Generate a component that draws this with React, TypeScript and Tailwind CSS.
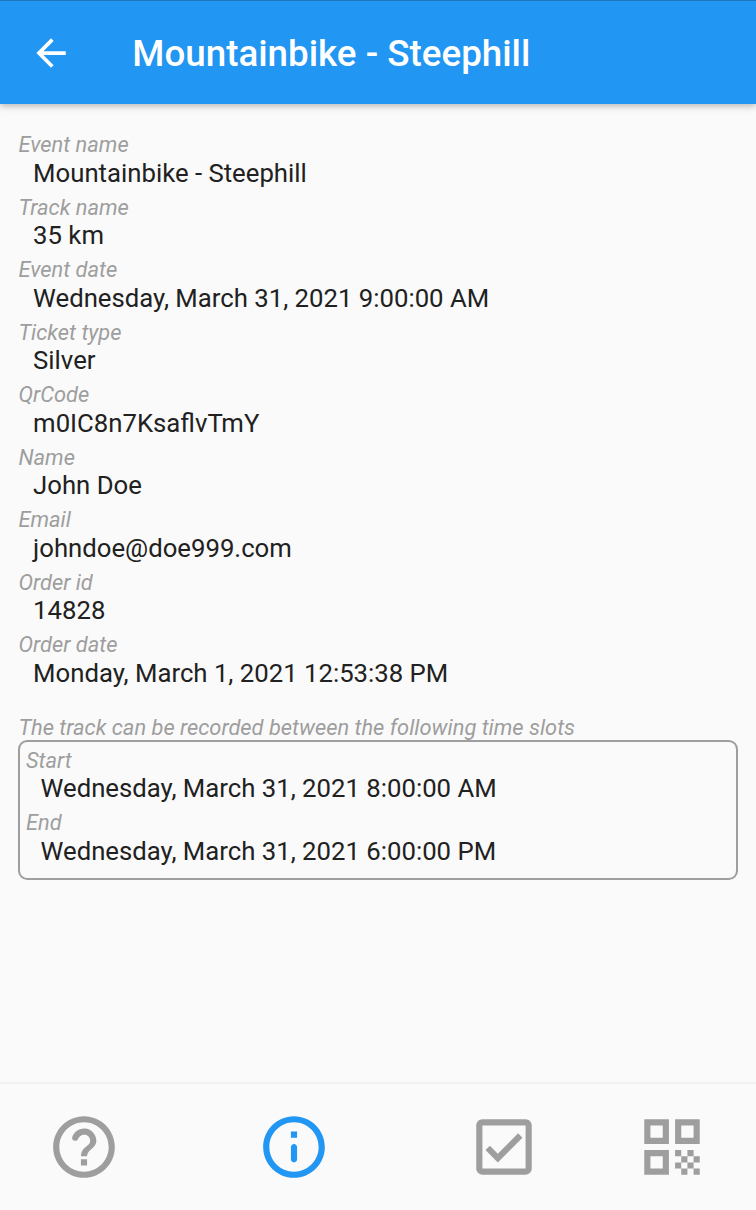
import type { ReactNode } from "react";

const fields = [
  { label: "Event name", value: "Mountainbike - Steephill" },
  { label: "Track name", value: "35 km" },
  { label: "Event date", value: "Wednesday, March 31, 2021 9:00:00 AM" },
  { label: "Ticket type", value: "Silver" },
  { label: "QrCode", value: "m0IC8n7KsaflvTmY" },
  { label: "Name", value: "John Doe" },
  { label: "Email", value: "johndoe@doe999.com" },
  { label: "Order id", value: "14828" },
  { label: "Order date", value: "Monday, March 1, 2021 12:53:38 PM" },
];

const slots = [
  { label: "Start", value: "Wednesday, March 31, 2021 8:00:00 AM" },
  { label: "End", value: "Wednesday, March 31, 2021 6:00:00 PM" },
];

function Label({ children }: { children: ReactNode }) {
  return (
    <div className="h-[25.3px] text-[21.87px] leading-[25.7px] text-[#9e9e9e] italic">
      {children}
    </div>
  );
}

function Field({ label, value }: { label: string; value: string }) {
  return (
    <div className="h-[62.5px]">
      <Label>{label}</Label>
      <div className="pl-[14.7px] text-[25.73px] leading-[30px] text-[#212121]">{value}</div>
    </div>
  );
}

function Icon({ d, className }: { d: string; className: string }) {
  return (
    <svg viewBox="0 0 24 24" fill="currentColor" className={className} aria-hidden="true">
      <path d={d} />
    </svg>
  );
}

const arrowPath = "M20 11H7.83l5.59-5.59L12 4l-8 8 8 8 1.41-1.41L7.83 13H20v-2z";
const helpPath =
  "M12 2C6.48 2 2 6.48 2 12s4.48 10 10 10 10-4.48 10-10S17.52 2 12 2zm0 18c-4.41 0-8-3.59-8-8s3.59-8 8-8 8 3.59 8 8-3.59 8-8 8zm-1-4h2v2h-2zm1.61-9.96c-2.06-.3-3.88.97-4.43 2.79-.18.58.26 1.17.87 1.17h.2c.41 0 .74-.29.88-.67.32-.89 1.27-1.5 2.3-1.28.95.2 1.65 1.13 1.57 2.1-.1 1.34-1.62 1.63-2.45 2.88 0 .01-.01.01-.01.02-.01.02-.02.03-.03.05-.09.15-.18.32-.25.5-.01.03-.03.05-.04.08-.01.02-.01.04-.02.07-.12.34-.2.75-.2 1.25h2c0-.42.11-.77.28-1.07.02-.03.03-.06.05-.09.08-.14.18-.27.28-.39.01-.01.02-.03.03-.04.1-.12.21-.23.33-.34.96-.91 2.26-1.65 1.99-3.56-.24-1.74-1.61-3.21-3.35-3.47z";
const infoPath =
  "M12 2C6.48 2 2 6.48 2 12s4.48 10 10 10 10-4.48 10-10S17.52 2 12 2zm0 18c-4.41 0-8-3.59-8-8s3.59-8 8-8 8 3.59 8 8-3.59 8-8 8zM11 7h2v2h-2zM12 17c.55 0 1-.45 1-1v-4c0-.55-.45-1-1-1s-1 .45-1 1v4c0 .55.45 1 1 1z";
const checkPath =
  "M19 3H5c-1.1 0-2 .9-2 2v14c0 1.1.9 2 2 2h14c1.1 0 2-.9 2-2V5c0-1.1-.9-2-2-2zm0 16H5V5h14v14zM17.99 9l-1.41-1.42-6.59 6.59-2.58-2.57-1.42 1.41 4 3.99z";
const qrPath =
  "M3 11h8V3H3v8zm2-6h4v4H5V5zM3 21h8v-8H3v8zm2-6h4v4H5v-4zM13 3v8h8V3h-8zm6 6h-4V5h4v4zM13 13h2v2h-2zM17 13h2v2h-2zM15 15h2v2h-2zM19 15h2v2h-2zM13 17h2v2h-2zM17 17h2v2h-2zM15 19h2v2h-2zM19 19h2v2h-2z";

const tab = "flex items-center justify-center text-[#9e9e9e]";
const tabIcon = "size-[74px] shrink-0";

export default function App() {
  return (
    <div className="flex h-[1210px] w-full flex-col overflow-hidden bg-[#fafafa] font-[Roboto,sans-serif]">
      <header className="z-10 flex h-[104px] shrink-0 items-center border-t border-[#1a75bb] bg-[#2196f3] pl-[29.4px] text-white shadow-[0_2px_7px_rgba(0,0,0,0.28)]">
        <button aria-label="Back" className="pt-px">
          <Icon d={arrowPath} className="size-[44.1px]" />
        </button>
        <h1 className="pt-px pl-[58.8px] text-[36.75px] leading-[43px] font-medium">
          Mountainbike - Steephill
        </h1>
      </header>

      <main className="flex-1 px-[18.4px] pt-[28.4px]">
        {fields.map((f) => (
          <Field key={f.label} label={f.label} value={f.value} />
        ))}
        <div className="pt-5">
          <Label>The track can be recorded between the following time slots</Label>
          <div className="h-[139.5px] rounded-[9.2px] border-2 border-[#9e9e9e] px-[5.5px] pt-[5.6px]">
            {slots.map((s) => (
              <Field key={s.label} label={s.label} value={s.value} />
            ))}
          </div>
        </div>
      </main>

      <nav className="grid h-[128px] shrink-0 grid-cols-[168px_252px_168px_168px] border-t-2 border-[#f1f1f1]">
        <button aria-label="Help" className={tab}>
          <Icon d={helpPath} className={tabIcon} />
        </button>
        <button aria-label="Info" className="flex items-center justify-center text-[#2196f3]">
          <Icon d={infoPath} className={tabIcon} />
        </button>
        <button aria-label="Checks" className={tab}>
          <Icon d={checkPath} className={tabIcon} />
        </button>
        <button aria-label="QR code" className={tab}>
          <Icon d={qrPath} className={tabIcon} />
        </button>
      </nav>
    </div>
  );
}
